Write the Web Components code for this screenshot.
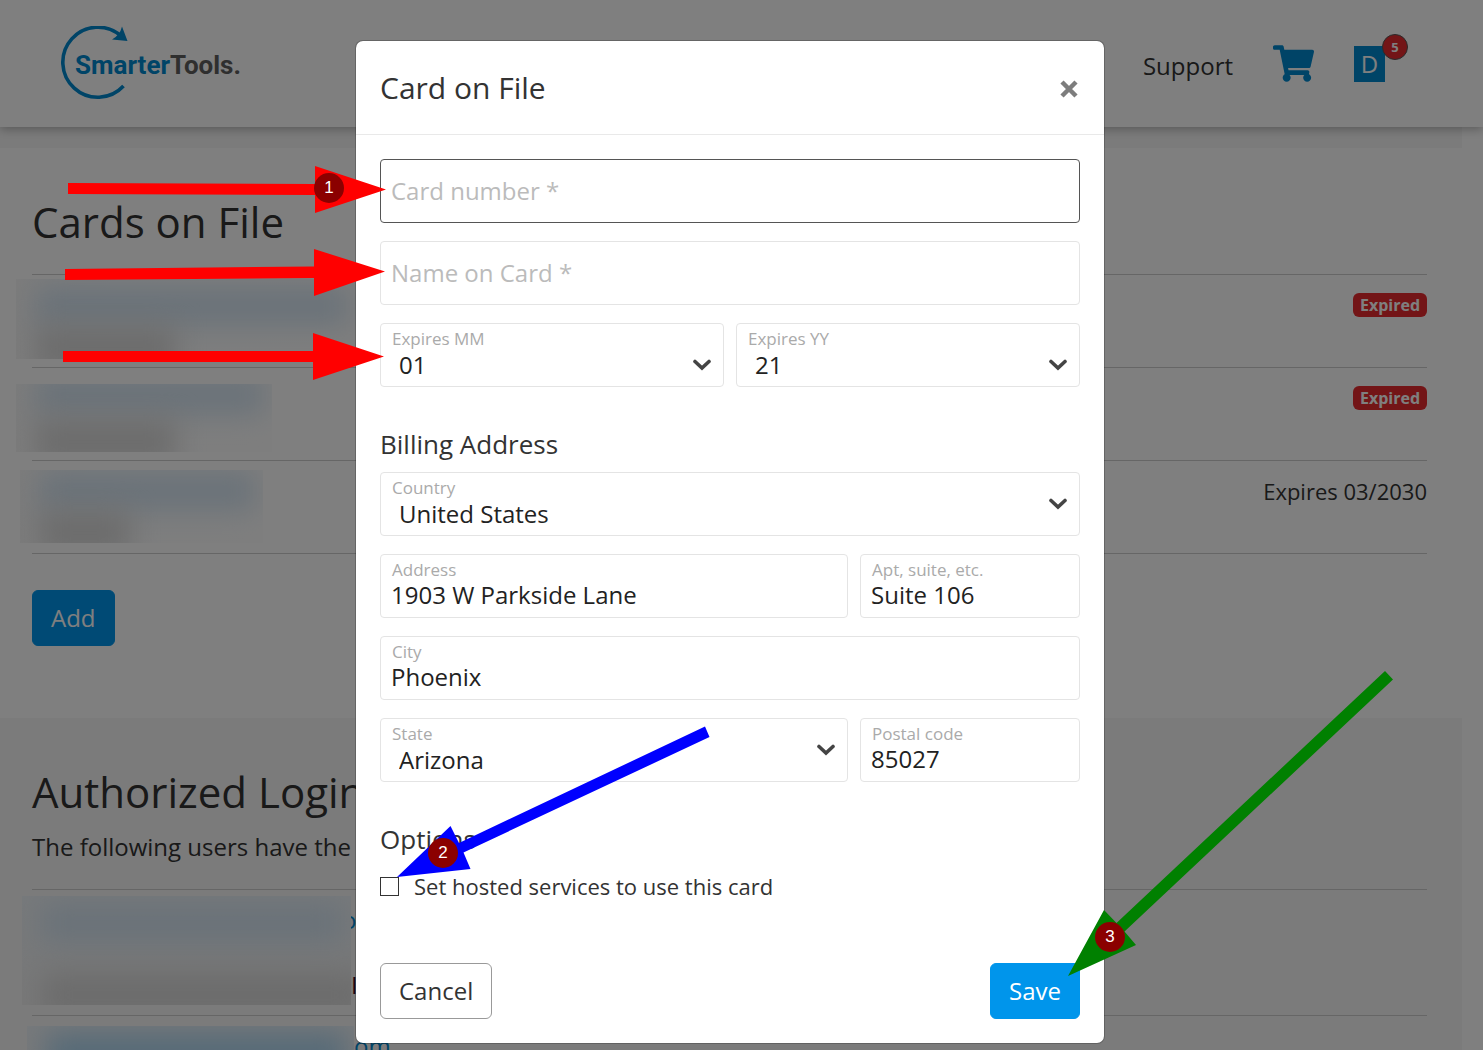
<!DOCTYPE html>
<html lang="en">
<head>
<meta charset="utf-8">
<title>Cards on File</title>
<style>
  body {
    margin: 0;
    color: #333;
    font: 24px/36px "Open Sans", "Noto Sans", sans-serif;
  }
</style>
</head>
<body>
<account-page>
  <site-header slot="header"></site-header>

  <page-section heading="Cards on File">
    <list-row style="--blur-left: -16px; --blur-top: 4px; --blur-width: 340px; --blur-height: 80px">
      <status-badge slot="end">Expired</status-badge>
    </list-row>
    <list-row style="--blur-left: -16px; --blur-top: 16px; --blur-width: 256px; --blur-height: 68px; --blue-y: -8px">
      <status-badge slot="end">Expired</status-badge>
    </list-row>
    <list-row style="--blur-left: -12px; --blur-top: 9px; --blur-width: 243px; --blur-height: 73px; --blue-y: 2px; --gray-width: 90px">
      <span slot="end">Expires 03/2030</span>
    </list-row>
    <action-button slot="actions" kind="primary">Add</action-button>
  </page-section>

  <page-section heading="Authorized Logins" shaded>
    <span slot="intro">The following users have the</span>
    <list-row tall style="--blur-left: -10px; --blur-top: 6px; --blur-width: 329px; --blur-height: 109px; --tail: 310px; --gray-width: 320px">
      <a href="#login">o</a>
      <span slot="note">I</span>
    </list-row>
    <list-row tall style="--blur-left: -5px; --blur-top: 10px; --blur-width: 327px; --blur-height: 109px; --tail: 322px; --gray-width: 320px; --blue: #a9d3ef">
      <a href="#login">om</a>
    </list-row>
  </page-section>

  <modal-dialog slot="modal" heading="Card on File">
    <field-row><text-field placeholder="Card number *" active></text-field></field-row>
    <field-row><text-field placeholder="Name on Card *"></text-field></field-row>
    <field-row columns="even">
      <select-field label="Expires MM" value="01" low></select-field>
      <select-field label="Expires YY" value="21" low></select-field>
    </field-row>
    <form-heading>Billing Address</form-heading>
    <field-row><select-field label="Country" value="United States"></select-field></field-row>
    <field-row columns="side">
      <text-field label="Address" value="1903 W Parkside Lane"></text-field>
      <text-field label="Apt, suite, etc." value="Suite 106"></text-field>
    </field-row>
    <field-row><text-field label="City" value="Phoenix"></text-field></field-row>
    <field-row columns="side">
      <select-field label="State" value="Arizona"></select-field>
      <text-field label="Postal code" value="85027"></text-field>
    </field-row>
    <form-heading>Options</form-heading>
    <check-option>Set hosted services to use this card</check-option>
    <action-button slot="footer">Cancel</action-button>
    <action-button slot="footer" kind="primary">Save</action-button>
  </modal-dialog>

  <guide-marks slot="marks"></guide-marks>
</account-page>

<script>
  class BaseElement extends HTMLElement {
    constructor() {
      super();
      this.attachShadow({ mode: "open" });
    }

    connectedCallback() {
      const template = document.createElement("template");
      template.innerHTML = `<style>*{box-sizing:border-box}${this.getStyles()}</style>${this.getTemplate()}`;
      this.shadowRoot.replaceChildren(template.content.cloneNode(true));
    }

    attr(name) {
      return this.getAttribute(name) || "";
    }
  }

  class AccountPage extends BaseElement {
    getTemplate() {
      return `
        <slot name="header"></slot>
        <main><slot></slot></main>
        <div class="backdrop"><slot name="modal"></slot></div>
        <slot name="marks"></slot>
      `;
    }

    getStyles() {
      return `
        :host{
          display: block;
          position: relative;
          height: 100vh;
          overflow: hidden;
          background: #fff;
        }
        main{
          margin-right: 21px;
          padding-top: 21px;
          background: #f7f7f7;
        }
        .backdrop{
          position: absolute;
          inset: 0;
          z-index: 2;
          display: flex;
          justify-content: center;
          align-items: flex-start;
          padding: 40px 23px 0 0;
          background: rgba(0, 0, 0, .5);
        }
      `;
    }
  }

  class SiteHeader extends BaseElement {
    getTemplate() {
      return `
        <a class="logo" href="#home" aria-label="SmarterTools">
          <svg width="182" height="76" viewBox="59 27 182 76">
            <path d="M120 37A35 35 0 1 0 122.500 87" fill="none" stroke="#0088cf" stroke-width="3.600"/>
            <path d="M121 27.500L126.500 42L111 40.500Q119 36 121 27.500Z" fill="#0088cf"/>
            <text x="74" y="75"><tspan fill="#0088cf">Smarter</tspan><tspan fill="#5e5e5e">Tools.</tspan></text>
          </svg>
        </a>
        <nav>
          <a class="link" href="#support">Support</a>
          <a class="icon" href="#cart" aria-label="Cart">
            <svg width="41" height="37" viewBox="0 0 576 512"><path fill="currentColor" d="M528.120 301.319l47.273-208C578.806 78.301 567.391 64 551.990 64H159.208l-9.166-44.810C147.758 8.021 137.930 0 126.529 0H24C10.745 0 0 10.745 0 24v16c0 13.255 10.745 24 24 24h69.883l70.248 343.435C147.325 417.100 136 435.222 136 456c0 30.928 25.072 56 56 56s56-25.072 56-56c0-15.674-6.447-29.835-16.824-40h209.647C430.447 426.165 424 440.326 424 456c0 30.928 25.072 56 56 56s56-25.072 56-56c0-22.172-12.888-41.332-31.579-50.405l5.517-24.276c3.413-15.018-8.002-29.319-23.403-29.319H218.117l-6.545-32h293.145c11.206 0 20.920-7.754 23.403-18.681z"/></svg>
          </a>
          <a class="avatar" href="#account">D<span class="count">5</span></a>
        </nav>
      `;
    }

    getStyles() {
      return `
        :host{
          position: relative;
          z-index: 1;
          display: flex;
          justify-content: space-between;
          align-items: center;
          height: 127px;
          box-sizing: border-box;
          padding: 0 98px 0 60px;
          background: #fff;
          box-shadow: 0 2px 10px rgba(0, 0, 0, .3);
        }
        svg{ display: block; }
        text{
          font: bold 26px Roboto, sans-serif;
        }
        nav{
          display: flex;
          align-items: center;
          gap: 40px;
        }
        a{
          color: inherit;
          text-decoration: none;
        }
        .link{ padding-top: 4px; }
        .icon{ color: #0088cf; }
        .avatar{
          position: relative;
          width: 31px;
          background: #0088cf;
          color: #fff;
          text-align: center;
        }
        .count{
          position: absolute;
          top: -12px;
          right: -23px;
          width: 26px;
          height: 26px;
          border: 1px solid #555;
          border-radius: 50%;
          background: #e62b2f;
          font: bold 13px/24px "Open Sans", sans-serif;
        }
      `;
    }
  }

  class PageSection extends BaseElement {
    getTemplate() {
      return `
        <h1>${this.attr("heading")}</h1>
        <p><slot name="intro"></slot></p>
        <slot></slot>
        <div class="actions"><slot name="actions"></slot></div>
      `;
    }

    getStyles() {
      return `
        :host{
          display: block;
          padding: 46px 35px 72px 32px;
          background: #fff;
        }
        :host([shaded]){ background: #f7f7f7; }
        h1{
          margin: 0;
          font-size: 42px;
          font-weight: 400;
          line-height: 56px;
        }
        p{ margin: 0 0 24px; }
        :host([shaded]) p{ margin-top: 9px; }
        .actions{
          padding-top: 36px;
          border-top: 1px solid #ccc;
        }
      `;
    }
  }

  // One saved item; its private details are covered by a blurred patch.
  class ListRow extends BaseElement {
    getTemplate() {
      return `
        <div class="text"><slot></slot><div class="note"><slot name="note"></slot></div></div>
        <div class="end"><slot name="end"></slot></div>
        <div class="blur"></div>
      `;
    }

    getStyles() {
      return `
        :host{
          position: relative;
          display: flex;
          justify-content: space-between;
          box-sizing: border-box;
          min-height: 93px;
          padding-top: 12px;
          border-top: 1px solid #ccc;
        }
        :host([tall]){ min-height: 126px; }
        .text{ padding-left: var(--tail, 0); }
        .note{
          margin: 29px 0 0 9px;
          color: #3a0a24;
        }
        .end{
          font-size: 22px;
        }
        ::slotted(a){
          color: #0088cf;
          text-decoration: none;
        }
        .blur{
          position: absolute;
          left: var(--blur-left);
          top: var(--blur-top);
          width: var(--blur-width);
          height: var(--blur-height);
          overflow: hidden;
          background: linear-gradient(90deg, #f8f8f8, #fbfcfd 30%, #fdfdfd);
        }
        :host([tall]) .blur{ background: linear-gradient(#eef3f7, #f1f1f1); }
        .blur::before, .blur::after{
          content: "";
          position: absolute;
          left: 20px;
          filter: blur(14px);
        }
        .blur::before{
          right: 8px;
          top: var(--blue-y, 8px);
          height: 38px;
          background: var(--blue, #d3e4f2);
        }
        .blur::after{
          width: var(--gray-width, 140px);
          bottom: -12px;
          height: 44px;
          background: #d8d8d8;
        }
      `;
    }
  }

  class StatusBadge extends BaseElement {
    getTemplate() {
      return `<slot></slot>`;
    }

    getStyles() {
      return `
        :host{
          display: block;
          margin-top: 6px;
          padding: 0 7px;
          border-radius: 6px;
          background: #e62b2f;
          color: #fff;
          font-size: 16px;
          font-weight: 700;
          line-height: 24px;
        }
      `;
    }
  }

  class ActionButton extends BaseElement {
    getTemplate() {
      return `<button type="button"><slot></slot></button>`;
    }

    getStyles() {
      return `
        :host{ display: inline-block; vertical-align: top; }
        button{
          display: block;
          padding: 9px 18px;
          border: 1px solid #999;
          border-radius: 6px;
          background: #fff;
          color: inherit;
          font: inherit;
        }
        :host([kind="primary"]) button{
          border-color: #0095eb;
          background: #0095eb;
          color: #fff;
        }
      `;
    }
  }

  class ModalDialog extends BaseElement {
    getTemplate() {
      return `
        <header>
          <h2>${this.attr("heading")}</h2>
          <button type="button" aria-label="Close">
            <svg width="18" height="18" viewBox="0 0 18 18"><path d="M2 2L16 16M16 2L2 16" stroke="#7d7d7d" stroke-width="4.500"/></svg>
          </button>
        </header>
        <form><slot></slot></form>
        <footer><slot name="footer"></slot></footer>
      `;
    }

    getStyles() {
      return `
        :host{
          display: block;
          box-sizing: border-box;
          width: 100%;
          max-width: 750px;
          border: 1px solid rgba(0, 0, 0, .2);
          border-radius: 8px;
          background: #fff;
          background-clip: padding-box;
        }
        header{
          display: flex;
          justify-content: space-between;
          align-items: center;
          padding: 29px 24px 28px;
          border-bottom: 1px solid #e9e9e9;
        }
        h2{
          margin: 0;
          font-size: 30px;
          font-weight: 400;
          line-height: 36px;
        }
        button{
          padding: 2px 2px 0;
          border: 0;
          background: none;
        }
        svg{ display: block; }
        form{
          display: grid;
          row-gap: 18px;
          padding: 24px 24px 0;
        }
        footer{
          display: flex;
          justify-content: space-between;
          padding: 58px 24px 24px;
        }
      `;
    }
  }

  class FieldRow extends BaseElement {
    getTemplate() {
      return `<slot></slot>`;
    }

    getStyles() {
      return `
        :host{
          display: grid;
          gap: 12px;
        }
        :host([columns="even"]){ grid-template-columns: 1fr 1fr; }
        :host([columns="side"]){ grid-template-columns: 1fr 220px; }
      `;
    }
  }

  class FormHeading extends BaseElement {
    getTemplate() {
      return `<h3><slot></slot></h3>`;
    }

    getStyles() {
      return `
        :host{ display: block; }
        h3{
          margin: 21px 0 -8px;
          font-size: 26px;
          font-weight: 400;
          line-height: 36px;
        }
      `;
    }
  }

  // Label and control share one grid cell, so the whole box is clickable.
  const fieldStyles = `
    :host{
      display: grid;
      height: 64px;
      box-sizing: border-box;
      border: 1px solid #e4e4e4;
      border-radius: 4px;
    }
    :host([active]){ border-color: #555; }
    label, input, select, svg{ grid-area: 1 / 1; }
    label{
      z-index: 1;
      justify-self: start;
      align-self: start;
      padding: 3px 11px 0;
      color: #aaa;
      font-size: 17px;
      line-height: 24px;
      pointer-events: none;
    }
    input, select{
      width: 100%;
      min-width: 0;
      margin: 0;
      padding: 18px 10px 0;
      border: 0;
      outline: 0;
      background: none;
      color: #222;
      font: inherit;
      appearance: none;
    }
  `;

  class TextField extends BaseElement {
    getTemplate() {
      if (this.hasAttribute("placeholder")) {
        const text = this.attr("placeholder");
        return `<input type="text" placeholder="${text}" aria-label="${text}">`;
      }
      return `
        <label for="control">${this.attr("label")}</label>
        <input id="control" type="text" value="${this.attr("value")}">
      `;
    }

    getStyles() {
      return `
        ${fieldStyles}
        input::placeholder{ color: #bbb; opacity: 1; }
        :host([placeholder]) input{ padding-top: 0; }
      `;
    }
  }

  class SelectField extends BaseElement {
    getTemplate() {
      return `
        <label for="control">${this.attr("label")}</label>
        <select id="control"><option>${this.attr("value")}</option></select>
        <svg width="18" height="12" viewBox="0 0 18 12"><path d="M2 2.500L9 9L16 2.500" fill="none" stroke="#444" stroke-width="3.600" stroke-linecap="round"/></svg>
      `;
    }

    getStyles() {
      return `
        ${fieldStyles}
        select{ padding: 20px 36px 0 18px; }
        svg{
          justify-self: end;
          align-self: center;
          margin-right: 12px;
          pointer-events: none;
        }
        :host([low]) svg{ margin-top: 20px; }
      `;
    }
  }

  class CheckOption extends BaseElement {
    getTemplate() {
      return `<label><input type="checkbox"><span><slot></slot></span></label>`;
    }

    getStyles() {
      return `
        :host{
          display: block;
          font-size: 22px;
          line-height: 38px;
        }
        label{
          display: flex;
          align-items: center;
          gap: 15px;
        }
        input{
          width: 19px;
          height: 19px;
          margin: 0;
          border: 1px solid #333;
          background: #fff;
          appearance: none;
        }
      `;
    }
  }

  // Arrows and numbered steps that lie over the whole page.
  class GuideMarks extends BaseElement {
    getTemplate() {
      return `
        <svg width="1483" height="1050" viewBox="0 0 1483 1050">
          <path fill="#f00" d="M68 183L315 184V166L386 189.500L315 213V195L68 194ZM65 269L314 266.500V249L385 271.500L314 296V278L65 280ZM63 351H313V333L384 356.500L313 380V362H63Z"/>
          <path fill="#00f" d="M705 726.500L459 843L450.500 826L397 877L470.500 869L463.500 852.500L709.500 737Z"/>
          <path fill="#008000" d="M1385 671L1116.500 923L1104 910L1068 976L1136 945L1124.500 931.500L1393 679.500Z"/>
        </svg>
        <span style="left: 314px; top: 173px">1</span>
        <span style="left: 428px; top: 838px">2</span>
        <span style="left: 1095px; top: 922px">3</span>
      `;
    }

    getStyles() {
      return `
        :host{
          position: absolute;
          inset: 0;
          z-index: 3;
          overflow: hidden;
          pointer-events: none;
        }
        svg{ display: block; }
        span{
          position: absolute;
          width: 30px;
          height: 30px;
          border-radius: 50%;
          background: #8b0000;
          color: #fff;
          font: 17px/30px "Liberation Sans", sans-serif;
          text-align: center;
        }
      `;
    }
  }

  customElements.define("account-page", AccountPage);
  customElements.define("site-header", SiteHeader);
  customElements.define("page-section", PageSection);
  customElements.define("list-row", ListRow);
  customElements.define("status-badge", StatusBadge);
  customElements.define("action-button", ActionButton);
  customElements.define("modal-dialog", ModalDialog);
  customElements.define("field-row", FieldRow);
  customElements.define("form-heading", FormHeading);
  customElements.define("text-field", TextField);
  customElements.define("select-field", SelectField);
  customElements.define("check-option", CheckOption);
  customElements.define("guide-marks", GuideMarks);
</script>
</body>
</html>
